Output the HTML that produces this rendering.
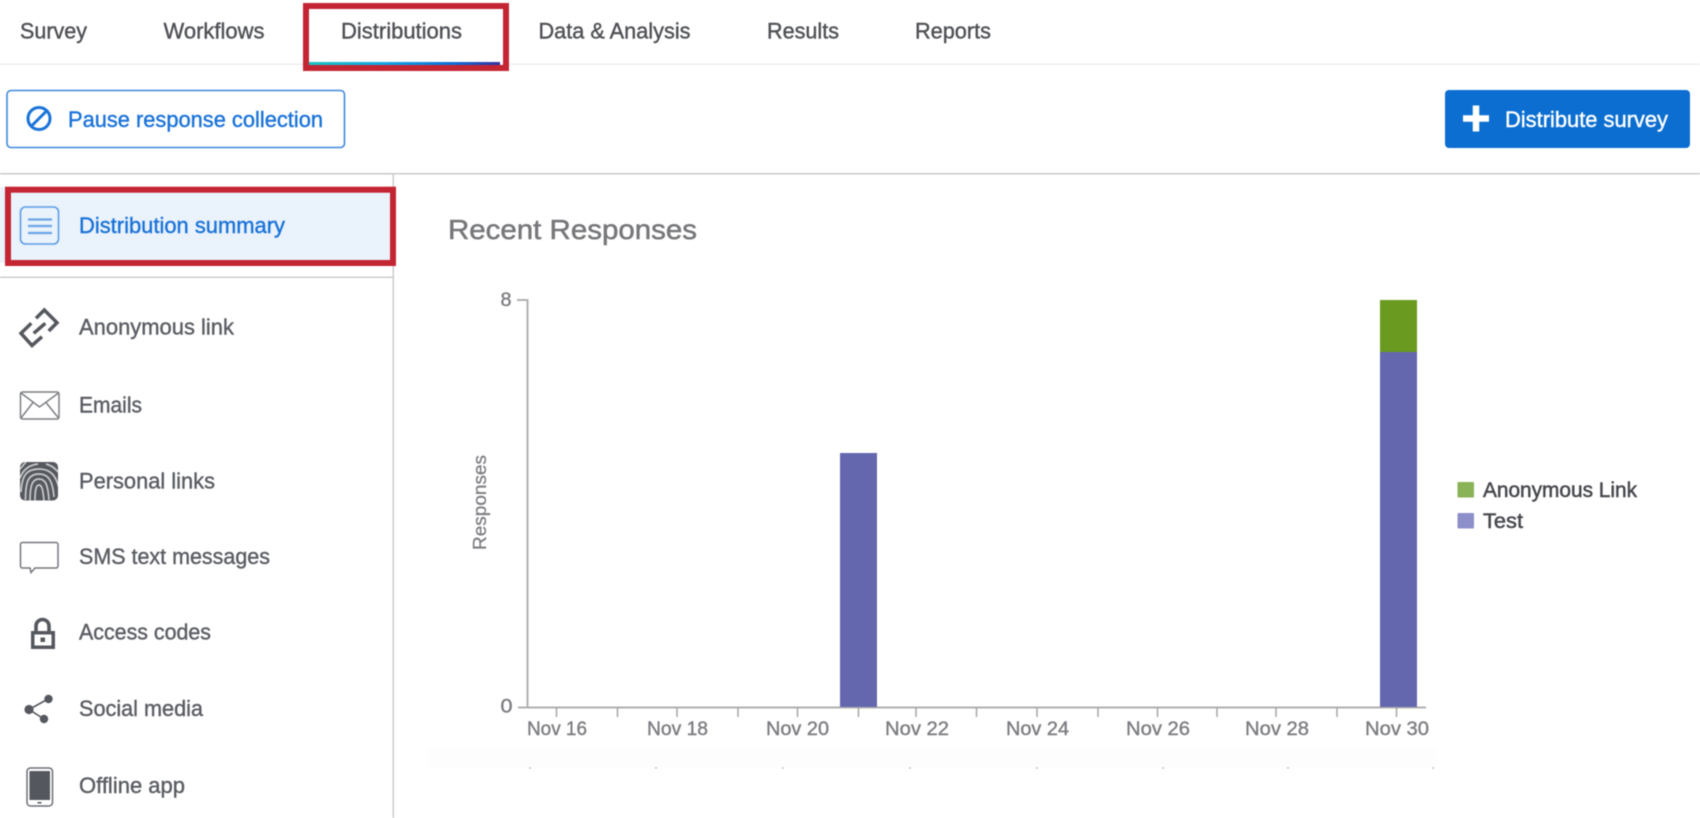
<!DOCTYPE html>
<html lang="en">
<head>
<meta charset="utf-8">
<title>Distributions</title>
<style>
html,body{margin:0;padding:0;background:#fff;width:1700px;height:818px;overflow:hidden}
svg{display:block;position:absolute;left:0;top:0;filter:blur(.5px)}
text{font-family:"Liberation Sans",sans-serif;white-space:pre}
.tab{font-size:22px;fill:#4f5156;stroke:#4f5156;stroke-width:.4px}
.side{font-size:22px;fill:#5a5d63;stroke:#5a5d63;stroke-width:.4px}
.blue{font-size:22px;fill:#1a73d8;stroke:#1a73d8;stroke-width:.4px}
.ax{font-size:19px;fill:#7d7e82;stroke:#7d7e82;stroke-width:.4px}
.leg{font-size:21px;fill:#46484d;stroke:#46484d;stroke-width:.5px}
</style>
</head>
<body>
<svg width="1700" height="818" viewBox="0 0 1700 818" xmlns="http://www.w3.org/2000/svg">
<defs>
<linearGradient id="g" x1="0" x2="1" y1="0" y2="0">
<stop offset="0" stop-color="#1cc3c0"/><stop offset=".4" stop-color="#12a5e6"/><stop offset=".75" stop-color="#0b6ed8"/><stop offset="1" stop-color="#35309f"/>
</linearGradient>
<clipPath id="fp"><rect x="20" y="462" width="38" height="38.500" rx="5"/></clipPath>
</defs>

<!-- tabs -->
<rect x="0" y="63.500" width="1700" height="1.500" fill="#eeeeee"/>
<text class="tab" x="20" y="38.500" textLength="67" lengthAdjust="spacingAndGlyphs">Survey</text>
<text class="tab" x="163.500" y="38.500" textLength="101" lengthAdjust="spacingAndGlyphs">Workflows</text>
<text class="tab" x="341" y="38.500" textLength="121" lengthAdjust="spacingAndGlyphs">Distributions</text>
<text class="tab" x="538.500" y="38.500" textLength="152" lengthAdjust="spacingAndGlyphs">Data &amp; Analysis</text>
<text class="tab" x="767" y="38.500" textLength="72" lengthAdjust="spacingAndGlyphs">Results</text>
<text class="tab" x="915" y="38.500" textLength="76" lengthAdjust="spacingAndGlyphs">Reports</text>
<rect x="309" y="62" width="191" height="3" fill="url(#g)"/>
<rect x="306" y="6" width="200" height="62" fill="none" stroke="#c32533" stroke-width="6"/>

<!-- pause button -->
<rect x="7" y="90.500" width="337.500" height="57" rx="4" fill="#fff" stroke="#3f88dd" stroke-width="1.600"/>
<circle cx="39" cy="118.500" r="11" fill="none" stroke="#1a73d8" stroke-width="3"/>
<path d="M31.500 126L46.500 111" stroke="#1a73d8" stroke-width="3" fill="none"/>
<text class="blue" x="68" y="127" textLength="255" lengthAdjust="spacingAndGlyphs">Pause response collection</text>

<!-- distribute button -->
<rect x="1445" y="90" width="245" height="58" rx="4" fill="#0b6ed0"/>
<path d="M1463 118.500H1489M1476 105.500V131.500" stroke="#fff" stroke-width="6.500" fill="none"/>
<text x="1505" y="127" font-size="22" fill="#fff" stroke="#fff" stroke-width=".4" textLength="163" lengthAdjust="spacingAndGlyphs">Distribute survey</text>

<!-- dividers -->
<rect x="0" y="173" width="1700" height="1.500" fill="#c8c8c8"/>
<rect x="392.500" y="174" width="1.500" height="644" fill="#cccccc"/>
<rect x="0" y="276.500" width="393" height="1.500" fill="#cccccc"/>

<!-- active sidebar -->
<rect x="0" y="187" width="393" height="76" fill="#e9f1fb"/>
<rect x="8" y="189.700" width="385" height="73.300" fill="#eaf2fb" stroke="#c32533" stroke-width="6"/>
<rect x="20.500" y="207" width="38" height="37" rx="5" fill="none" stroke="#5b9de6" stroke-width="1.600"/>
<path d="M28 219.500H52M28 226H52M28 233H52" stroke="#6ba6e8" stroke-width="2.200" fill="none"/>
<text class="blue" x="79" y="233" textLength="206" lengthAdjust="spacingAndGlyphs">Distribution summary</text>

<!-- sidebar items -->
<g fill="none" stroke="#55585e" stroke-width="3.500">
<path d="M36 318.300L44.300 310L57 322.700L48.700 331"/>
<path d="M31.300 323.300L21 333.300L32 345.500L42 336.700"/>
<path d="M33.700 333.300L45.300 323.300"/>
</g>
<text class="side" x="79" y="334.500" textLength="155" lengthAdjust="spacingAndGlyphs">Anonymous link</text>

<g fill="none" stroke="#7c7f84" stroke-width="1.500">
<rect x="20.500" y="392" width="38.500" height="27" rx="2"/>
<path d="M21 393L39.500 407L58.500 393M21 418L33 402.500M58.500 418L46 402.500"/>
</g>
<text class="side" x="79" y="412.500" textLength="63" lengthAdjust="spacingAndGlyphs">Emails</text>

<rect x="20" y="462" width="38" height="38.500" rx="5" fill="#55585e"/>
<g fill="none" stroke="#c9cacc" stroke-width="1.700" clip-path="url(#fp)">
<path d="M35 501C35 490 36 485 39 485C42 485 43 490 44 501"/>
<path d="M30 501C30 486 32 479 39 479C46 479 48 486 49 500"/>
<path d="M25.500 500C25.500 482 28 474 39 474C50 474 53 484 54 497"/>
<path d="M21 492C22 476 26 469 39 469C51 469 56 476 59 488"/>
<path d="M20 478C23 470 29 465 38 464M46 464C50 465 54 467 58 472"/>
<path d="M20 469L26 462"/>
</g>
<text class="side" x="79" y="488.500" textLength="136" lengthAdjust="spacingAndGlyphs">Personal links</text>

<path d="M22.500 542.500H56a2 2 0 0 1 2 2V566a2 2 0 0 1-2 2H35L31 572.500L30 568H22.500a2 2 0 0 1-2-2V544.500a2 2 0 0 1 2-2Z" fill="none" stroke="#74777c" stroke-width="1.500"/>
<text class="side" x="79" y="564" textLength="191" lengthAdjust="spacingAndGlyphs">SMS text messages</text>

<path d="M36 632V626a6.500 6.500 0 0 1 13 0V632" fill="none" stroke="#55585e" stroke-width="3.600"/>
<rect x="31" y="631" width="24" height="18" fill="#55585e"/>
<rect x="34.500" y="634.500" width="17" height="11" fill="#fff"/>
<rect x="40.500" y="637.500" width="4.500" height="4.500" fill="#55585e"/>
<text class="side" x="79" y="639.500" textLength="132" lengthAdjust="spacingAndGlyphs">Access codes</text>

<path d="M48 699L29 709.500L44 719" fill="none" stroke="#55585e" stroke-width="1.600"/>
<circle cx="48.500" cy="699" r="4.200" fill="#55585e"/><circle cx="29" cy="709.500" r="4.600" fill="#55585e"/><circle cx="44" cy="719" r="4.200" fill="#55585e"/>
<text class="side" x="79" y="716" textLength="124" lengthAdjust="spacingAndGlyphs">Social media</text>

<rect x="27" y="768" width="25.500" height="38" rx="3.500" fill="#fff" stroke="#6b6e73" stroke-width="1.500"/>
<rect x="29.500" y="771" width="20.500" height="29" fill="#54575d"/>
<rect x="37.500" y="802" width="4" height="1.500" fill="#54575d"/>
<text class="side" x="79" y="793" textLength="106" lengthAdjust="spacingAndGlyphs">Offline app</text>

<!-- chart -->
<text x="448" y="239" font-size="27.500" fill="#76777a" stroke="#76777a" stroke-width=".5" textLength="249" lengthAdjust="spacingAndGlyphs">Recent Responses</text>
<text class="ax" x="500.500" y="306" textLength="11" lengthAdjust="spacingAndGlyphs">8</text>
<text class="ax" x="500.500" y="712.500" textLength="12" lengthAdjust="spacingAndGlyphs">0</text>
<text transform="translate(486 550) rotate(-90)" font-size="18" fill="#7d7e82" stroke="#7d7e82" stroke-width=".3" textLength="95" lengthAdjust="spacingAndGlyphs">Responses</text>

<path d="M517 300H527.500V707" fill="none" stroke="#b0b0b0" stroke-width="2"/>
<path d="M518 707.500H1426" stroke="#b0b0b0" stroke-width="2" fill="none"/>
<path d="M556.500 708V717M617.500 708V717M677 708V717M738 708V717M797.500 708V717M858.500 708V717M916 708V717M976.500 708V717M1037 708V717M1098 708V717M1157.500 708V717M1217 708V717M1276 708V717M1337 708V717M1396.500 708V717" stroke="#a0a0a0" stroke-width="1.400" fill="none"/>

<rect x="840" y="453" width="37" height="254" fill="#6567ae"/>
<rect x="1380" y="352" width="37" height="355" fill="#6567ae"/>
<rect x="1380" y="300" width="37" height="52" fill="#6a9a1f"/>

<text class="ax" x="527" y="735" textLength="60" lengthAdjust="spacingAndGlyphs">Nov 16</text>
<text class="ax" x="647" y="735" textLength="61" lengthAdjust="spacingAndGlyphs">Nov 18</text>
<text class="ax" x="766" y="735" textLength="63" lengthAdjust="spacingAndGlyphs">Nov 20</text>
<text class="ax" x="885" y="735" textLength="64" lengthAdjust="spacingAndGlyphs">Nov 22</text>
<text class="ax" x="1006" y="735" textLength="63" lengthAdjust="spacingAndGlyphs">Nov 24</text>
<text class="ax" x="1126" y="735" textLength="64" lengthAdjust="spacingAndGlyphs">Nov 26</text>
<text class="ax" x="1245" y="735" textLength="64" lengthAdjust="spacingAndGlyphs">Nov 28</text>
<text class="ax" x="1365" y="735" textLength="64" lengthAdjust="spacingAndGlyphs">Nov 30</text>

<rect x="428" y="748" width="1008" height="20" fill="#fdfdfd"/>
<path d="M529 768h2M655 768h2M782 768h2M909 768h2M1036 768h2M1162 768h2M1287 768h2M1432 768h2" stroke="#b8b8b8" stroke-width="1.200" fill="none"/>

<!-- legend -->
<rect x="1457.500" y="482" width="16.500" height="15.500" rx="1" fill="#8ab256"/>
<rect x="1457.500" y="513" width="16.500" height="15.500" rx="1" fill="#8d8fca"/>
<text class="leg" x="1483" y="497" textLength="154" lengthAdjust="spacingAndGlyphs">Anonymous Link</text>
<text class="leg" x="1483" y="528" textLength="40" lengthAdjust="spacingAndGlyphs">Test</text>
</svg>
</body>
</html>
